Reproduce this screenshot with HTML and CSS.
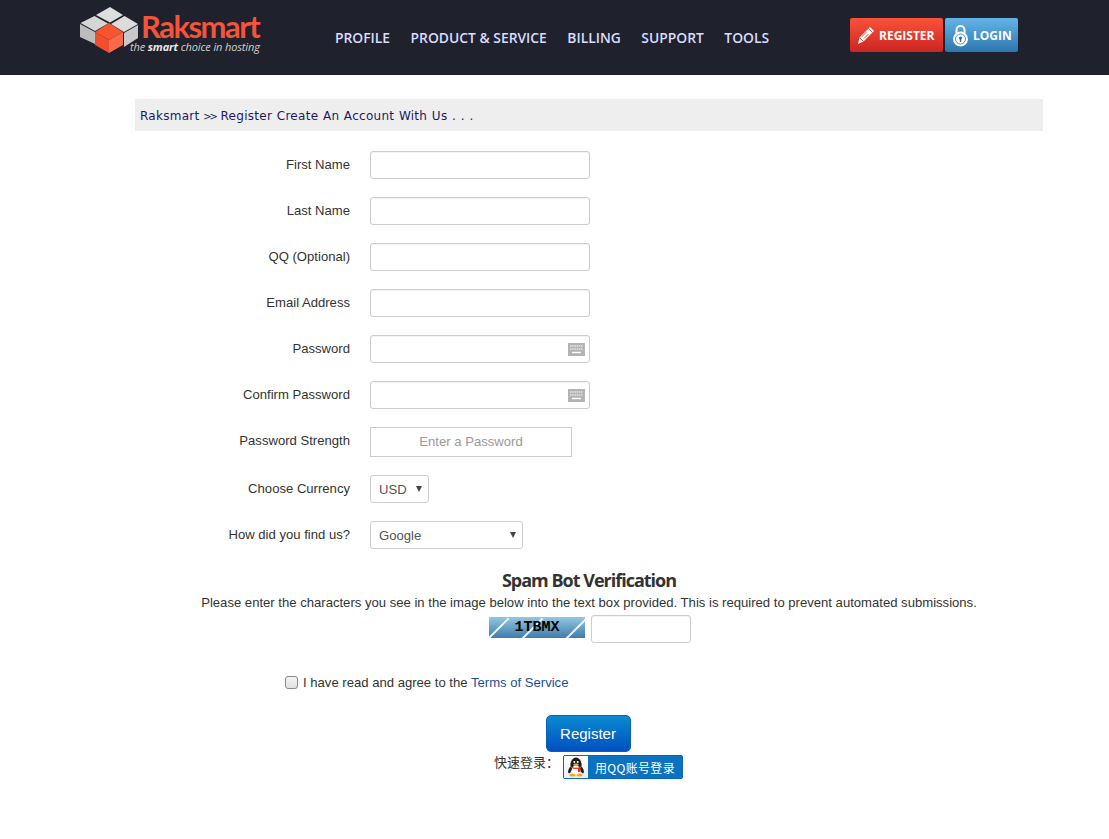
FILE: index.html
```html
<!DOCTYPE html>
<html lang="en">
<head>
<meta charset="utf-8">
<title>Raksmart Register</title>
<link rel="stylesheet" href="styles.css">
</head>
<body>
<header class="topbar">
  <a class="logo" href="#">
    <svg class="logo-cube" width="60" height="48" viewBox="0 0 60 48">
      <polygon points="30,0 43,8 30,15.5 16,8" fill="#dedede"/>
      <polygon points="14.5,9 28,16.5 15,24 0.5,16" fill="#d6d6d6"/>
      <polygon points="44.5,9 58,17 44,25 31,17" fill="#dcdcdc"/>
      <polygon points="0,17 15,25 15,37 0,30" fill="#bcbcbc"/>
      <polygon points="58,18 58,31 44,40 44,26" fill="#c8c8c8"/>
      <polygon points="29,16 43,25 29,33 15,25" fill="#f5552f"/>
      <polygon points="15,25 29,33 29,46 15,38" fill="#ef4f2d"/>
      <polygon points="43,25 43,38 29,46 29,33" fill="#fb6a48"/>
    </svg>
    <span class="logo-text">
      <span class="logo-name">Raksmart</span>
      <span class="logo-tag">the <b>smart</b> choice in hosting</span>
    </span>
  </a>
  <nav class="nav">
    <a href="#">PROFILE</a>
    <a href="#">PRODUCT &amp; SERVICE</a>
    <a href="#">BILLING</a>
    <a href="#">SUPPORT</a>
    <a href="#">TOOLS</a>
  </nav>
  <div class="auth">
    <a class="auth-btn auth-red" href="#">
      <svg width="18" height="19" viewBox="0 0 18 19">
        <path d="M13 1 L17 5 L6.5 15.5 L1 18 L2.5 11.5 Z" fill="#fff"/>
        <path d="M11.5 2.5 L15.5 6.5 M9.5 6 L5 10.5 M11.5 8 L7 12.5 M2.5 11.5 L6.5 15.5" stroke="#e2402f" stroke-width=".9" fill="none"/>
      </svg>
      REGISTER
    </a>
    <a class="auth-btn auth-blue" href="#">
      <svg width="17" height="23" viewBox="0 0 17 23">
        <path d="M4.5 10 V6 a4 4 0 0 1 8 0 V10" fill="none" stroke="#fff" stroke-width="2"/>
        <circle cx="8.5" cy="15" r="7.5" fill="#fff"/>
        <circle cx="8.5" cy="15" r="5" fill="none" stroke="#4d93c6" stroke-width="1"/>
        <circle cx="8.5" cy="14" r="1.6" fill="#2f6f9f"/>
        <rect x="7.8" y="14" width="1.4" height="4" fill="#2f6f9f"/>
      </svg>
      LOGIN
    </a>
  </div>
</header>

<main class="content">
  <div class="crumb">Raksmart <span class="crumb-sep">&gt;&gt;</span> Register Create An Account With Us . . .</div>

  <form class="form">
    <div class="row"><label class="label">First Name</label><input class="field" type="text"></div>
    <div class="row"><label class="label">Last Name</label><input class="field" type="text"></div>
    <div class="row"><label class="label">QQ (Optional)</label><input class="field" type="text"></div>
    <div class="row"><label class="label">Email Address</label><input class="field" type="text"></div>
    <div class="row"><label class="label">Password</label>
      <span class="pw-wrap"><input class="field" type="password">
        <svg class="kbd" width="17" height="13" viewBox="0 0 17 13"><rect width="17" height="13" fill="#b3b3b3"/><path d="M2 3h13M2 6h13" stroke="#fff" stroke-width="1" stroke-dasharray="1.5 .7"/><path d="M4 9.5h9" stroke="#fff" stroke-width="1.4"/></svg>
      </span>
    </div>
    <div class="row"><label class="label">Confirm Password</label>
      <span class="pw-wrap"><input class="field" type="password">
        <svg class="kbd" width="17" height="13" viewBox="0 0 17 13"><rect width="17" height="13" fill="#b3b3b3"/><path d="M2 3h13M2 6h13" stroke="#fff" stroke-width="1" stroke-dasharray="1.5 .7"/><path d="M4 9.5h9" stroke="#fff" stroke-width="1.4"/></svg>
      </span>
    </div>
    <div class="row row-strength"><label class="label">Password Strength</label><div class="strength">Enter a Password</div></div>
    <div class="row"><label class="label">Choose Currency</label>
      <span class="select-wrap"><select class="select select-cur"><option>USD</option></select></span>
    </div>
    <div class="row"><label class="label">How did you find us?</label>
      <span class="select-wrap"><select class="select select-find"><option>Google</option></select></span>
    </div>

    <section class="spam">
      <h2 class="spam-title">Spam Bot Verification</h2>
      <p class="spam-text">Please enter the characters you see in the image below into the text box provided. This is required to prevent automated submissions.</p>
      <div class="captcha-row">
        <div class="captcha"><span class="stripe s1"></span><span class="stripe s2"></span><span class="stripe s3"></span><span class="captcha-code">1TBMX</span></div>
        <input class="field captcha-input" type="text">
      </div>
    </section>

    <label class="agree"><input class="check" type="checkbox"><span>I have read and agree to the <a href="#">Terms of Service</a></span></label>

    <div class="submit"><button class="register" type="button">Register</button></div>
    <div class="qq-row">
      <span class="qq-label">快速登录：</span>
      <a class="qq-btn" href="#">
        <span class="qq-icon">
          <svg width="18" height="20" viewBox="0 0 18 20">
            <ellipse cx="9" cy="8" rx="5.6" ry="7.5" fill="#1c1c1c"/>
            <ellipse cx="9" cy="13" rx="4.4" ry="4.6" fill="#fff"/>
            <ellipse cx="3" cy="13" rx="1.5" ry="3.4" fill="#1c1c1c" transform="rotate(20 3 13)"/>
            <ellipse cx="15" cy="13" rx="1.5" ry="3.4" fill="#1c1c1c" transform="rotate(-20 15 13)"/>
            <path d="M4 9.5 Q9 12 14 9.5 L14 11 Q9 13 4 11 Z" fill="#e0301e"/>
            <rect x="11" y="11" width="2.5" height="4" fill="#e0301e"/>
            <ellipse cx="9" cy="7.8" rx="2.8" ry="1.3" fill="#f5a623"/>
            <circle cx="7.3" cy="5" r="1" fill="#fff"/><circle cx="10.7" cy="5" r="1" fill="#fff"/>
            <ellipse cx="5.5" cy="18" rx="3" ry="1.5" fill="#f5a623"/>
            <ellipse cx="12.5" cy="18" rx="3" ry="1.5" fill="#f5a623"/>
          </svg>
        </span>
        <span class="qq-text">用QQ账号登录</span>
      </a>
    </div>
  </form>
</main>
</body>
</html>
```

FILE: styles.css
```css
* { box-sizing: border-box; }
html, body { margin: 0; padding: 0; background: #fff; }
body { font-family: "Liberation Sans", Arial, sans-serif; font-size: 13.1px; color: #333; height: 839px; overflow: hidden; }
a { text-decoration: none; }

.topbar { height: 75px; background: #1f222c; display: flex; align-items: flex-start; padding-left: 80px; }
.logo { display: flex; margin-top: 7px; width: 255px; height: 50px; flex: none; }
.logo-cube { flex: none; }
.logo-text { display: flex; flex-direction: column; margin-left: 1px; }
.logo-name { font-family: Lato, sans-serif; font-weight: 700; font-size: 31px; line-height: 34px; height: 31px; color: #f5533a; letter-spacing: -1.5px; margin-top: 2px; }
.logo-tag { font-family: "Open Sans", sans-serif; font-style: italic; font-size: 11px; line-height: 13px; color: #d0d0d0; margin-left: -11px; letter-spacing: -.13px; }
.logo-tag b { color: #e8e8e8; }

.nav { display: flex; gap: 20.5px; margin-top: 29px; width: 515px; flex: none; }
.nav a { font-family: "Open Sans", sans-serif; font-weight: 600; font-size: 13.85px; line-height: 18px; color: #dadcff; }

.auth { display: flex; gap: 2px; margin-top: 18px; }
.auth-btn { height: 34px; border-radius: 2px; display: flex; align-items: center; gap: 4px; color: #fff; font-family: "Open Sans", sans-serif; font-weight: 700; font-size: 12px; padding-left: 7px; }
.auth-red { width: 93px; background: linear-gradient(#f9533a, #cc2521); }
.auth-blue { width: 73px; background: linear-gradient(#65b4e8, #2c76ae); }

.content { width: 908px; margin: 24px 0 0 135px; }
.crumb { height: 32px; background: #eee; padding-left: 5px; font-family: "DejaVu Sans", sans-serif; font-size: 12px; letter-spacing: .28px; word-spacing: .5px; line-height: 34px; color: #1c1a5c; }
.crumb-sep { font-size: 10px; letter-spacing: -2px; margin-left: -1px; }
.form { margin-top: 20px; }
.row { display: flex; align-items: center; height: 28px; margin-bottom: 18px; }
.label { width: 215px; margin-right: 20px; text-align: right; line-height: 24px; }
.field { width: 220px; height: 28px; border: 1px solid #ccc; border-radius: 3px; background: #fff; padding: 0 8px; box-shadow: inset 0 1px 1px rgba(0,0,0,.05); }
.pw-wrap { position: relative; display: block; height: 28px; }
.kbd { position: absolute; right: 5px; top: 8px; }
.row-strength { height: 30px; }
.row-strength .label { margin-top: -2px; }
.strength { width: 202px; height: 30px; border: 1px solid #ccc; text-align: center; line-height: 27px; color: #999; }
.select-wrap { position: relative; display: block; height: 28px; }
.select-wrap::after { content: ""; position: absolute; right: 7px; top: 11px; border-left: 3px solid transparent; border-right: 3px solid transparent; border-top: 6px solid #444; pointer-events: none; }
.select { appearance: none; height: 28px; border: 1px solid #ccc; border-radius: 3px; background: #fff; padding: 0 8px; color: #555; font-family: "Liberation Sans", Arial, sans-serif; font-size: 13.1px; display: block; }
.select-cur { width: 59px; }
.select-find { width: 153px; }

.spam { text-align: center; padding-top: 1px; }
.spam-title { margin: 0; font-family: "Open Sans", sans-serif; font-weight: 700; font-size: 18px; line-height: 25px; color: #333; letter-spacing: -1px; }
.spam-text { margin: 0; line-height: 20px; }
.captcha-row { display: flex; justify-content: center; align-items: flex-start; gap: 6px; margin-top: 2px; padding-left: 2px; }
.captcha { position: relative; overflow: hidden; width: 96px; height: 21px; margin-top: 2px; background: linear-gradient(#94c8e0, #3f7bad); text-align: center; }
.captcha-code { position: relative; font-family: "Liberation Mono", monospace; font-weight: 700; font-size: 15px; line-height: 21px; color: #000; }
.stripe { position: absolute; top: -3px; width: 2px; height: 30px; background: #fff; transform: rotate(45deg); opacity: .9; }
.s1 { left: 8px; } .s2 { left: 42px; } .s3 { left: 86px; }
.captcha-input { width: 100px; }

.agree { display: flex; align-items: center; margin: 25px 0 0 150px; height: 28px; }
.agree a { color: #1c4f96; }
.check { appearance: none; width: 13px; height: 13px; margin: 0 5px 0 0; border: 1px solid #8a8a8a; border-radius: 3px; background: linear-gradient(#f4f4f4, #e2e2e2); }
.submit { display: flex; justify-content: center; margin-top: 19px; padding-right: 2px; }
.register { width: 85px; height: 37px; border: 1px solid #0b5fb5; border-radius: 5px; background: linear-gradient(#0a8ad0, #0050c0); color: #fff; font-family: "Liberation Sans", Arial, sans-serif; font-size: 15px; padding: 0; }
.qq-row { display: flex; margin-top: 3px; margin-left: 359px; }
.qq-label { font-family: "Noto Sans CJK SC", sans-serif; font-size: 13px; line-height: 14px; width: 69px; color: #333; }
.qq-btn { display: flex; width: 120px; height: 24px; border: 1px solid #0a68b2; border-radius: 2px; background: #0a72c0; color: #fff; }
.qq-icon { width: 24px; background: linear-gradient(#fff, #e8eff6); display: flex; align-items: center; justify-content: center; flex: none; }
.qq-text { flex: 1; text-align: center; font-family: "Noto Sans CJK SC", sans-serif; font-size: 12px; letter-spacing: .3px; line-height: 23px; }
```
